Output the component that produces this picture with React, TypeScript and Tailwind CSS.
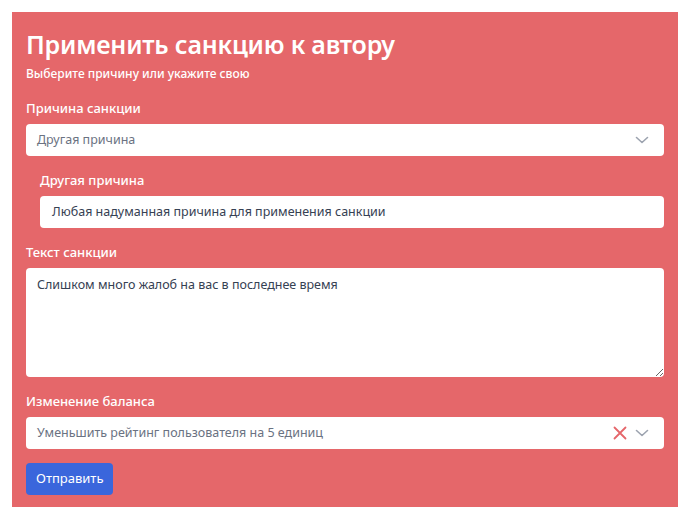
function Chevron() {
  return (
    <svg width="16" height="16" viewBox="0 0 16 16" fill="none" stroke="#9ca3af" strokeWidth="1.6" strokeLinecap="round" strokeLinejoin="round">
      <path d="M2.5 5.5 8 10.5l5.5-5" />
    </svg>
  );
}

function Cross() {
  return (
    <svg width="14" height="14" viewBox="0 0 14 14" fill="none" stroke="#e5666a" strokeWidth="1.8" strokeLinecap="round">
      <path d="M1.5 1.5l11 11M12.5 1.5l-11 11" />
    </svg>
  );
}

function Label({ children }: { children: React.ReactNode }) {
  return <div className="text-[13px] font-medium text-white leading-4 mb-2">{children}</div>;
}

export default function App() {
  return (
    <div className="min-h-screen bg-white p-3 font-['Noto_Sans',sans-serif]">
      <div className="bg-[#e5676a] px-[14px] pt-4 pb-3 h-[495px]">
        <h1 className="text-[25px] font-semibold text-white leading-8 tracking-[-0.2px]">Применить санкцию к автору</h1>
        <p className="text-[12px] font-medium text-white mt-[6px] leading-4">Выберите причину или укажите свою</p>

        <div className="mt-[18px]">
          <Label>Причина санкции</Label>
          <div className="h-8 bg-white rounded flex items-center justify-between pl-[11px] pr-[14px] text-[12.5px] text-gray-500">
            <span>Другая причина</span>
            <Chevron />
          </div>
        </div>

        <div className="mt-4 pl-[14px]">
          <Label>Другая причина</Label>
          <div className="h-8 bg-white rounded flex items-center px-3 text-[12.5px] text-gray-700">
            Любая надуманная причина для применения санкции
          </div>
        </div>

        <div className="mt-4">
          <Label>Текст санкции</Label>
          <textarea
            className="block w-full h-[109px] bg-white rounded px-[11px] py-2 text-[12.5px] text-gray-700 outline-none"
            defaultValue="Слишком много жалоб на вас в последнее время"
          />
        </div>

        <div className="mt-4">
          <Label>Изменение баланса</Label>
          <div className="h-8 bg-white rounded flex items-center justify-between pl-[11px] pr-[14px] text-[12.5px] text-gray-500">
            <span>Уменьшить рейтинг пользователя на 5 единиц</span>
            <div className="flex items-center gap-[7px]">
              <Cross />
              <Chevron />
            </div>
          </div>
        </div>

        <button className="mt-[14px] h-8 px-[10px] rounded bg-[#3a66dc] text-white text-[13px] font-normal">Отправить</button>
      </div>
    </div>
  );
}
